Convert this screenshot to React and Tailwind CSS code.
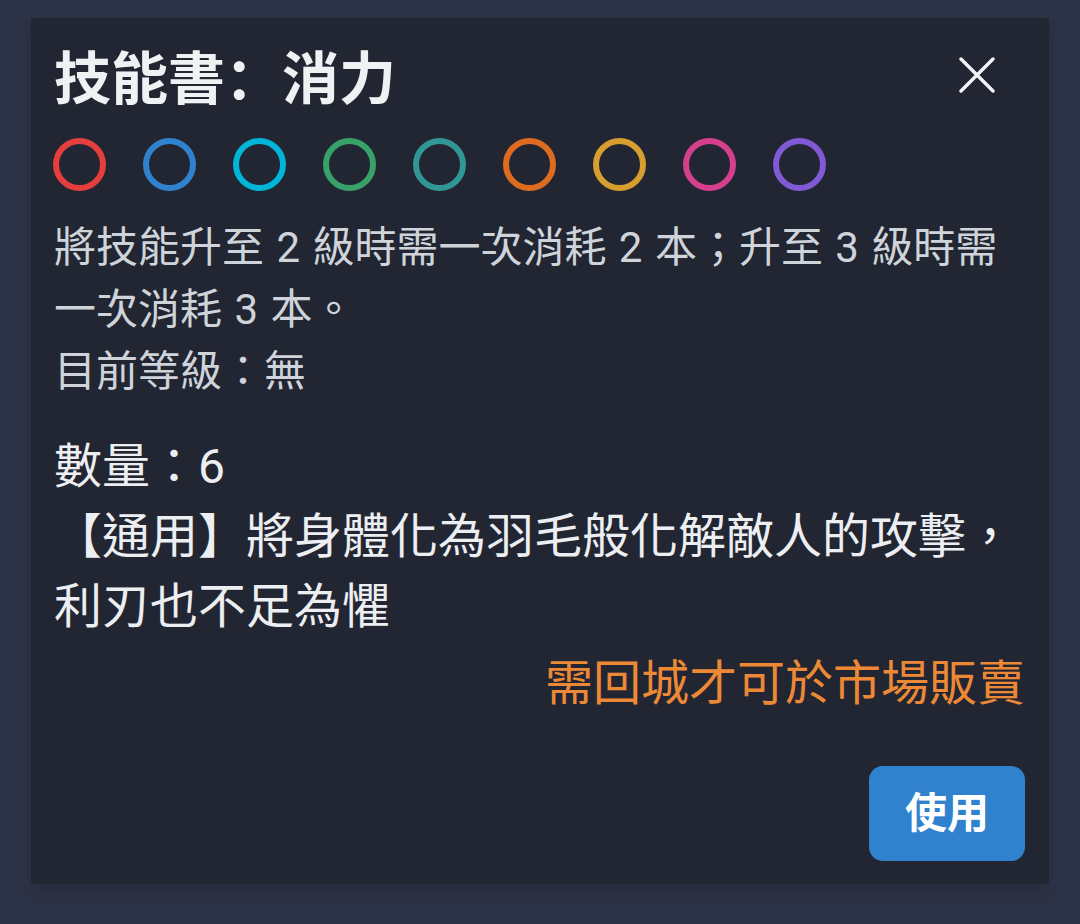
import React from "react";

const RINGS = [
    "border-[#e53e3e]",
    "border-[#3182ce]",
    "border-[#00b5d8]",
    "border-[#38a169]",
    "border-[#319795]",
    "border-[#dd6b20]",
    "border-[#d69e2e]",
    "border-[#d53f8c]",
    "border-[#805ad5]",
];

const FONT = "font-['Roboto','Noto_Sans_CJK_TC',sans-serif]";

export default function App() {
    return (
        <div className={`min-h-[924px] w-full bg-[#2d3346] pt-[17px] pl-[30px] ${FONT}`}>
            <div className="w-[1020px] h-[868px] bg-[#212632] border border-[#2c313d] rounded-[2px] shadow-lg flex flex-col pl-[23px] pr-[24px] pt-[20px] pb-[23px]">
                {/* Header */}
                <div className="flex items-center justify-between">
                    <h2 className="font-['Noto_Sans_CJK_SC','Noto_Sans_CJK_TC',sans-serif] text-[57px] leading-[72px] font-bold text-[#f0f1f3]">
                        技能書：消力
                    </h2>
                    <button
                        type="button"
                        aria-label="close"
                        className="mr-[29px] mt-[2px] w-[38px] h-[38px] flex items-center justify-center text-[#f3f4f6]"
                    >
                        <svg width="36" height="36" viewBox="0 0 36 36" fill="none">
                            <path
                                d="M2 2 L34 34 M34 2 L2 34"
                                stroke="currentColor"
                                strokeWidth="3.4"
                                strokeLinecap="round"
                            />
                        </svg>
                    </button>
                </div>

                {/* Rings */}
                <div className="flex gap-[37px] mt-[28px] -ml-[1px]">
                    {RINGS.map((c) => (
                        <span key={c} className={`w-[53px] h-[53px] rounded-full border-[6px] ${c}`} />
                    ))}
                </div>

                {/* Upgrade note */}
                <p className="mt-[26px] text-[42px] leading-[62px] text-[#cfd3da] [word-spacing:2px]">
                    將技能升至 2 級時需一次消耗 2 本；升至 3 級時需一次消耗 3 本。
                    <br />
                    目前等級：無
                </p>

                <p className="mt-[29px] text-[48px] leading-[70px] text-[#eceef1]">數量：6</p>
                <p className="text-[48px] leading-[70px] text-[#eceef1]">
                    【通用】將身體化為羽毛般化解敵人的攻擊，利刃也不足為懼
                </p>

                <p className="mt-[7px] text-right text-[48px] leading-[70px] text-[#ed8936]">
                    需回城才可於市場販賣
                </p>

                <div className="flex-1" />
                <div className="flex justify-end">
                    <button
                        type="button"
                        className="w-[156px] h-[95px] rounded-[14px] bg-[#3182ce] text-white text-[42px] font-bold flex items-center justify-center"
                    >
                        使用
                    </button>
                </div>
            </div>
        </div>
    );
}
